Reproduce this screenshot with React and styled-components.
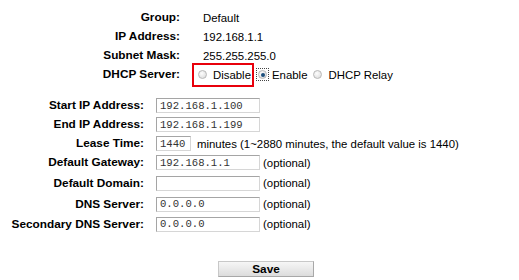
import React from 'react';
import styled, { createGlobalStyle } from 'styled-components';

const GlobalStyle = createGlobalStyle`
  body {
    margin: 0;
    background: #fff;
    font-family: Arial, "Liberation Sans", sans-serif;
    font-size: 11.4px;
    color: #000;
  }
`;

const Page = styled.div`
  width: 519px;
  height: 280px;
  padding-top: 8px;
  box-sizing: border-box;
`;

const Section = styled.div`
  display: grid;
  grid-template-columns: ${({ labelWidth }) => labelWidth}px auto;
  column-gap: ${({ gap }) => gap}px;
  align-items: center;
  margin-bottom: ${({ after }) => after || 0}px;
`;

const Label = styled.div`
  font-weight: bold;
  font-size: 11.8px;
  text-align: right;
  white-space: nowrap;
  height: ${({ h }) => h || 19}px;
  line-height: ${({ h }) => h || 19}px;
`;

const Value = styled.div`
  display: flex;
  align-items: center;
  height: ${({ h }) => h || 19}px;
  white-space: nowrap;
`;

const Marked = styled.span`
  display: inline-flex;
  align-items: center;
  margin-left: -11px;
  height: 20px;
  padding: 0 1px 0 4px;
  border: 2px solid #e8000b;
`;

const Radio = styled.span`
  display: inline-block;
  box-sizing: border-box;
  width: 9px;
  height: 9px;
  border-radius: 50%;
  border: 1px solid #b8b8b8;
  background: radial-gradient(circle at 40% 35%, #fdfdfd, #d8d8d8);
  margin-right: 6px;
  position: relative;

  &::after {
    content: '';
    display: ${({ checked }) => (checked ? 'block' : 'none')};
    position: absolute;
    left: 1.5px;
    top: 1.5px;
    width: 4px;
    height: 4px;
    border-radius: 50%;
    background: #1d4f7c;
  }
`;

const Focus = styled.span`
  display: inline-flex;
  align-items: center;
  justify-content: center;
  box-sizing: border-box;
  width: 13px;
  height: 13px;
  border: 1px dotted #444;
  margin: 0 3px 0 2px;

  ${Radio} {
    margin: 0;
  }
`;

const Option = styled.span`
  display: inline-flex;
  align-items: center;
  margin-right: ${({ space }) => space || 0}px;
`;

const Field = styled.input`
  box-sizing: border-box;
  width: ${({ w }) => w || 104}px;
  height: 15px;
  padding: 0 0 0 3px;
  margin: 0;
  border: 1px solid #d6d6d6;
  border-top-color: #a5a5a5;
  border-left-color: #a5a5a5;
  font-family: "Courier New", "Liberation Mono", monospace;
  font-size: 10.6px;
  color: #333;
  background: #fff;
  outline: none;
`;

const Note = styled.span`
  margin-left: ${({ space }) => space || 3}px;
  color: #000;
`;

const Footer = styled.div`
  display: flex;
  justify-content: flex-start;
  padding-left: 218px;
  margin-top: 27px;
`;

const Button = styled.button`
  width: 96px;
  height: 16px;
  padding: 0;
  font-family: Arial, "Liberation Sans", sans-serif;
  font-size: 11.8px;
  font-weight: bold;
  color: #000;
  background: linear-gradient(#f6f6f6, #dcdcdc);
  border: 1px solid #c8c8c8;
  border-right-color: #a8a8a8;
  border-bottom-color: #a8a8a8;
`;

const top = [
  ['Group:', 'Default'],
  ['IP Address:', '192.168.1.1'],
  ['Subnet Mask:', '255.255.255.0'],
];

export default function App() {
  return (
    <Page>
      <GlobalStyle />
      <Section labelWidth={180} gap={23} after={12}>
        {top.map(([l, v]) => (
          <React.Fragment key={l}>
            <Label>{l}</Label>
            <Value>{v}</Value>
          </React.Fragment>
        ))}
        <Label>DHCP Server:</Label>
        <Value>
          <Marked>
            <Radio />
            Disable
          </Marked>
          <Option space={6}>
            <Focus>
              <Radio checked />
            </Focus>
            Enable
          </Option>
          <Option>
            <Radio />
            DHCP Relay
          </Option>
        </Value>
      </Section>

      <Section labelWidth={144} gap={12}>
        <Label>Start IP Address:</Label>
        <Value><Field defaultValue="192.168.1.100" /></Value>
        <Label>End IP Address:</Label>
        <Value><Field defaultValue="192.168.1.199" /></Value>
        <Label>Lease Time:</Label>
        <Value>
          <Field w={35} defaultValue="1440" />
          <Note space={6}>minutes (1~2880 minutes, the default value is 1440)</Note>
        </Value>
        <Label>Default Gateway:</Label>
        <Value>
          <Field defaultValue="192.168.1.1" />
          <Note>(optional)</Note>
        </Value>
        <Label h={22}>Default Domain:</Label>
        <Value h={22}>
          <Field defaultValue="" />
          <Note>(optional)</Note>
        </Value>
        <Label h={20}>DNS Server:</Label>
        <Value h={20}>
          <Field defaultValue="0.0.0.0" />
          <Note>(optional)</Note>
        </Value>
        <Label h={20}>Secondary DNS Server:</Label>
        <Value h={20}>
          <Field defaultValue="0.0.0.0" />
          <Note>(optional)</Note>
        </Value>
      </Section>

      <Footer>
        <Button>Save</Button>
      </Footer>
    </Page>
  );
}
